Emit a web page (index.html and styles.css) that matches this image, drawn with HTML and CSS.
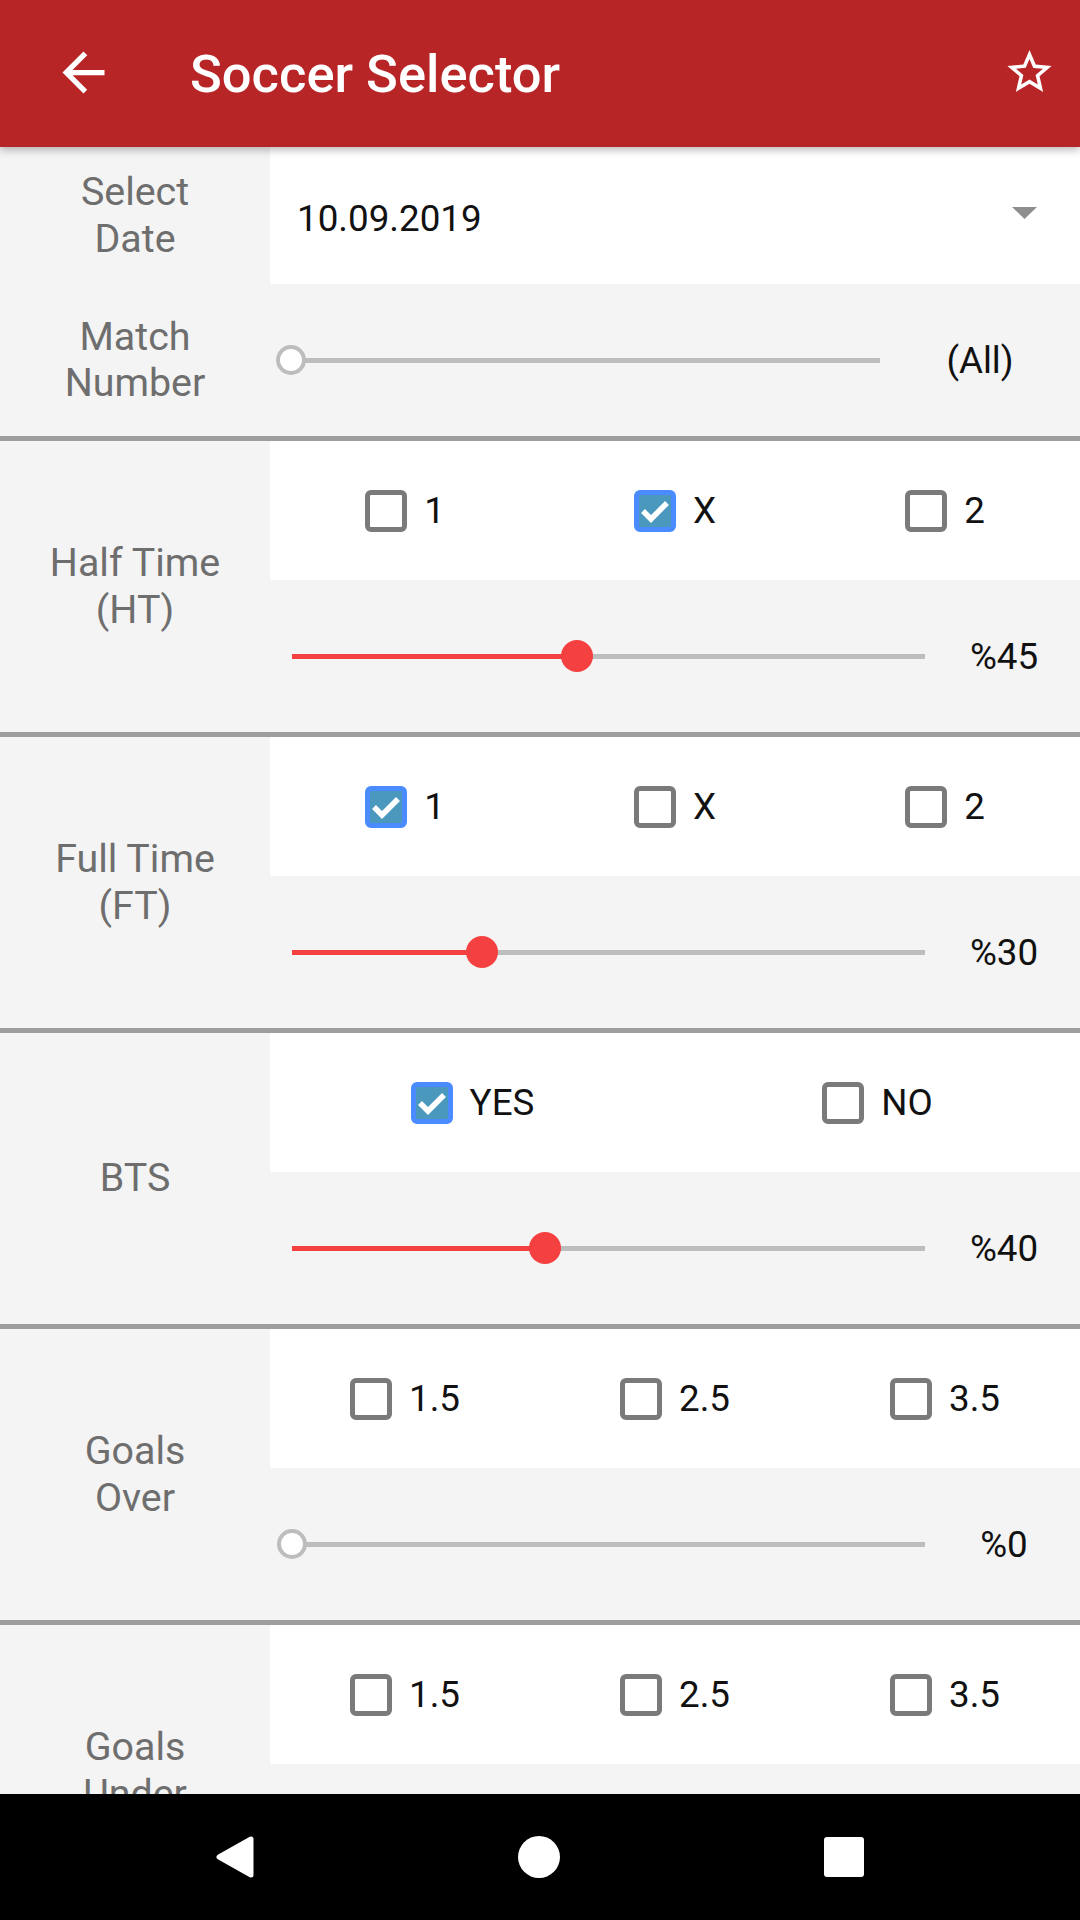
FILE: index.html
```html
<!DOCTYPE html>
<html lang="en">
<head>
<meta charset="utf-8">
<title>Soccer Selector</title>
<link rel="stylesheet" href="styles.css">
</head>
<body>
<div class="app">
  <header class="appbar">
    <span class="icon-btn back">
      <svg viewBox="0 0 24 24" width="63" height="63"><path fill="#fff" d="M20 11H7.83l5.59-5.59L12 4l-8 8 8 8 1.41-1.41L7.83 13H20v-2z"/></svg>
    </span>
    <h1 class="title">Soccer Selector</h1>
    <span class="icon-btn star">
      <svg viewBox="0 0 24 24" width="53" height="53"><path fill="#fff" d="M22 9.24l-7.19-.62L12 2 9.19 8.630 2 9.24l5.46 4.73L5.82 21 12 17.27 18.18 21l-1.63-7.03L22 9.24zM12 15.4l-3.76 2.270 1-4.28-3.32-2.88 4.38-.38L12 6.1l1.71 4.04 4.38.38-3.32 2.88 1 4.28L12 15.4z"/></svg>
    </span>
  </header>

  <main class="content">
    <div class="row row-date">
      <div class="label">Select<br>Date</div>
      <div class="date-cell">
        <span class="date">10.09.2019</span>
        <svg class="caret" viewBox="0 0 25 12" width="25" height="12"><polygon points="0,0 25,0 12.5,12" fill="#8e8e8e"/></svg>
      </div>
    </div>
    <div class="row row-match">
      <div class="label">Match<br>Number</div>
      <div class="slider-cell match">
        <div class="track"><div class="thumb empty" style="left:0%"></div></div>
        <div class="value">(All)</div>
      </div>
    </div>
    <div class="divider"></div>

    <section class="group">
      <div class="label">Half Time<br>(HT)</div>
      <div class="options three">
        <label class="opt"><span class="box"></span><span>1</span></label>
        <label class="opt"><span class="box checked"><svg viewBox="0 0 32 32" width="32" height="32"><polyline points="4,16 12,24 28,8" fill="none" stroke="#fff" stroke-width="5.5"/></svg></span><span>X</span></label>
        <label class="opt"><span class="box"></span><span>2</span></label>
      </div>
      <div class="slider-cell">
        <div class="track"><div class="fill" style="width:45%"></div><div class="thumb" style="left:45%"></div></div>
        <div class="value">%45</div>
      </div>
    </section>
    <div class="divider"></div>

    <section class="group">
      <div class="label">Full Time<br>(FT)</div>
      <div class="options three">
        <label class="opt"><span class="box checked"><svg viewBox="0 0 32 32" width="32" height="32"><polyline points="4,16 12,24 28,8" fill="none" stroke="#fff" stroke-width="5.5"/></svg></span><span>1</span></label>
        <label class="opt"><span class="box"></span><span>X</span></label>
        <label class="opt"><span class="box"></span><span>2</span></label>
      </div>
      <div class="slider-cell">
        <div class="track"><div class="fill" style="width:30%"></div><div class="thumb" style="left:30%"></div></div>
        <div class="value">%30</div>
      </div>
    </section>
    <div class="divider"></div>

    <section class="group">
      <div class="label">BTS</div>
      <div class="options two">
        <label class="opt"><span class="box checked"><svg viewBox="0 0 32 32" width="32" height="32"><polyline points="4,16 12,24 28,8" fill="none" stroke="#fff" stroke-width="5.5"/></svg></span><span>YES</span></label>
        <label class="opt"><span class="box"></span><span>NO</span></label>
      </div>
      <div class="slider-cell">
        <div class="track"><div class="fill" style="width:40%"></div><div class="thumb" style="left:40%"></div></div>
        <div class="value">%40</div>
      </div>
    </section>
    <div class="divider"></div>

    <section class="group">
      <div class="label">Goals<br>Over</div>
      <div class="options three">
        <label class="opt"><span class="box"></span><span>1.5</span></label>
        <label class="opt"><span class="box"></span><span>2.5</span></label>
        <label class="opt"><span class="box"></span><span>3.5</span></label>
      </div>
      <div class="slider-cell">
        <div class="track"><div class="thumb empty" style="left:0%"></div></div>
        <div class="value">%0</div>
      </div>
    </section>
    <div class="divider"></div>

    <section class="group">
      <div class="label">Goals<br>Under</div>
      <div class="options three">
        <label class="opt"><span class="box"></span><span>1.5</span></label>
        <label class="opt"><span class="box"></span><span>2.5</span></label>
        <label class="opt"><span class="box"></span><span>3.5</span></label>
      </div>
      <div class="slider-cell">
        <div class="track"><div class="thumb empty" style="left:0%"></div></div>
        <div class="value">%0</div>
      </div>
    </section>
  </main>

  <nav class="navbar">
    <svg class="nav-back" viewBox="0 0 38 42" width="38" height="42"><polygon points="35,3 35,39 3,21" fill="#fff" stroke="#fff" stroke-width="5" stroke-linejoin="round"/></svg>
    <span class="nav-home"></span>
    <span class="nav-recent"></span>
  </nav>
</div>
</body>
</html>
```

FILE: styles.css
```css
* { box-sizing: border-box; }
html, body { margin: 0; padding: 0; }
body {
  width: 1080px;
  height: 1920px;
  overflow: hidden;
  font-family: Roboto, "Noto Sans", "Liberation Sans", sans-serif;
  background: #f4f4f4;
}
.app {
  display: flex;
  flex-direction: column;
  height: 1920px;
}
.appbar {
  flex: 0 0 147px;
  height: 147px;
  background: #b72527;
  display: flex;
  align-items: center;
  position: relative;
  z-index: 2;
  box-shadow: 0 3px 8px rgba(0,0,0,0.28);
}
.icon-btn { display: flex; align-items: center; justify-content: center; }
.icon-btn svg { display: block; }
.back { margin-left: 52px; width: 63px; height: 63px; margin-top: -2px; }
.title {
  margin: 0 0 0 75px;
  font-size: 52.5px;
  font-weight: 500;
  color: #fff;
  flex: 1;
  letter-spacing: 0;
}
.star { width: 53px; height: 53px; margin-right: 24px; margin-top: -4px; }
.star svg { width: 54px; height: 54px; }

.content {
  flex: 1 1 0;
  min-height: 0;
  overflow: hidden;
  background: #f4f4f4;
}
.row, .group {
  display: grid;
  grid-template-columns: 270px 1fr;
}
.row-date { height: 137px; }
.row-match { height: 152px; }
.group {
  grid-template-rows: 139px 152px;
  height: 291px;
}
.group .label { grid-row: 1 / 3; }
.label {
  display: flex;
  align-items: center;
  justify-content: center;
  text-align: center;
  font-size: 39.4px;
  line-height: 46.5px;
  color: #6e6e6e;
  background: #f4f4f4;
}
.date-cell {
  background: #fff;
  display: flex;
  align-items: center;
  padding-left: 27px;
  padding-right: 43px;
}
.date {
  font-size: 36.75px;
  color: #111;
  flex: 1;
  margin-top: 6px;
}
.caret { display: block; margin-top: -6px; }

.divider { height: 5px; background: #9e9e9e; }

.options {
  background: #fff;
  display: grid;
  align-items: center;
  justify-items: center;
}
.options.three { grid-template-columns: repeat(3, 1fr); }
.options.two { grid-template-columns: repeat(2, 1fr); }
.opt {
  display: inline-flex;
  align-items: center;
  gap: 17px;
  font-size: 36.75px;
  color: #111;
}
.box {
  width: 42px;
  height: 42px;
  border: 5px solid #7a7a7a;
  border-radius: 6px;
  background: #fff;
  display: flex;
  align-items: center;
  justify-content: center;
}
.box.checked {
  border-color: #4a8cff;
  background: #4a98be;
}
.box svg { display: block; }

.slider-cell {
  display: flex;
  align-items: center;
  padding-left: 22px;
  background: #f4f4f4;
}
.slider-cell.match { padding-left: 21px; }
.track {
  position: relative;
  width: 633px;
  height: 5px;
  background: #bdbdbd;
}
.match .track { width: 589px; }
.fill {
  position: absolute;
  left: 0; top: 0;
  height: 100%;
  background: #f44040;
}
.thumb {
  position: absolute;
  top: 50%;
  width: 32px;
  height: 32px;
  border-radius: 50%;
  background: #f44040;
  transform: translate(-50%, -50%);
}
.thumb.empty {
  width: 30px;
  height: 30px;
  background: #fff;
  border: 4px solid #bdbdbd;
}
.value {
  flex: 1;
  text-align: center;
  font-size: 36.75px;
  color: #111;
  margin-left: 3px;
}
.match .value { margin-left: 0; }

.navbar {
  flex: 0 0 126px;
  height: 126px;
  background: #000;
  display: flex;
  align-items: center;
  justify-content: center;
  gap: 264px;
  position: relative;
  z-index: 2;
}
.nav-back { display: block; }
.nav-home {
  width: 42px; height: 42px;
  border-radius: 50%;
  background: #fff;
}
.nav-recent {
  width: 40px; height: 40px;
  border-radius: 3px;
  background: #fff;
}
```
